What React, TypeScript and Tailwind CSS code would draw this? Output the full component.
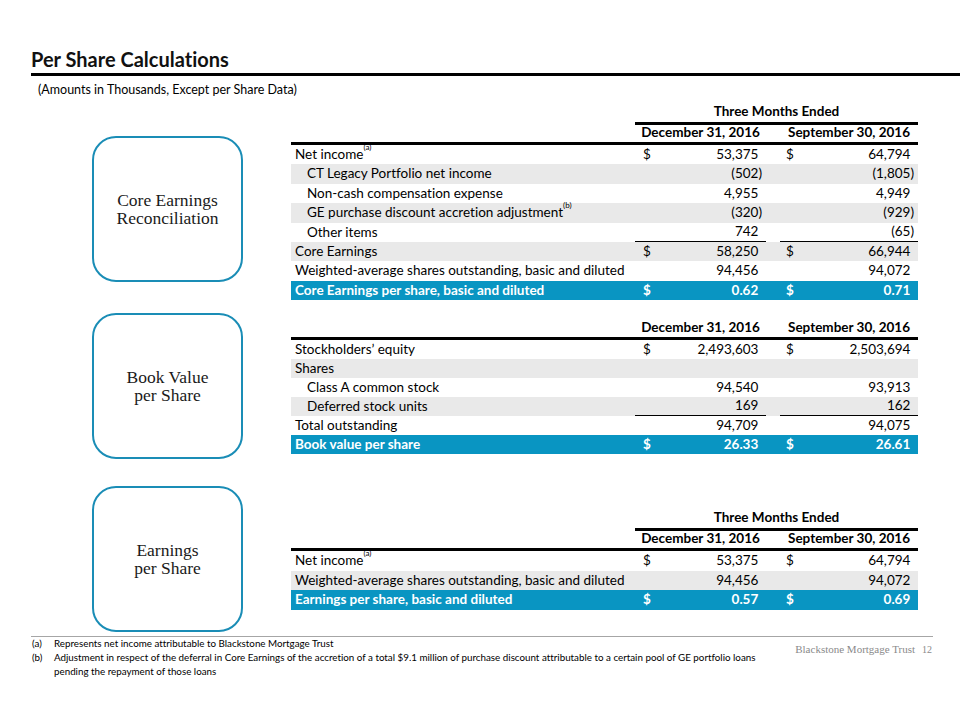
import React from "react";

type Row = {
  label: React.ReactNode;
  indent?: boolean;
  bg?: "w" | "g" | "b";
  d1?: boolean;
  v1: string;
  v2: string;
  under?: boolean;
};

const SANS = "font-['Lato','Open_Sans',sans-serif] [font-variant-ligatures:none]";

function Val({ v }: { v: string }) {
  const neg = v.endsWith(")");
  return (
    <span>
      {v}
      {!neg && v !== "" ? <span className="invisible">)</span> : null}
    </span>
  );
}

function TRow({ r, h }: { r: Row; h: string }) {
  const bg =
    r.bg === "g" ? "bg-[#e9e9e9]" : r.bg === "b" ? "bg-[#0995c2] text-white font-bold" : "bg-white";
  return (
    <div className={`flex ${h} items-center text-[13.5px] leading-none ${bg}`}>
      <div className={`w-[344px] ${r.indent ? "pl-[16px]" : "pl-[4px]"} whitespace-nowrap`}>{r.label}</div>
      <div
        className={`box-border flex h-full w-[131px] items-center justify-between pl-[8px] pr-[4px] ${
          r.under ? "border-b border-black" : ""
        }`}
      >
        <span>{r.d1 ? "$" : ""}</span>
        <Val v={r.v1} />
      </div>
      <div className="w-[14px]" />
      <div
        className={`box-border flex h-full w-[138px] items-center justify-between pl-[6px] pr-[4px] ${
          r.under ? "border-b border-black" : ""
        }`}
      >
        <span>{r.d1 ? "$" : ""}</span>
        <Val v={r.v2} />
      </div>
    </div>
  );
}

function Header({ three }: { three: boolean }) {
  return (
    <div className="text-[13.5px] font-bold leading-none">
      {three && (
        <div className="flex">
          <div className="w-[344px]" />
          <div className="box-border flex h-[21px] w-[283px] items-center justify-center border-b-[3px] border-black pb-[2px]">
            Three Months Ended
          </div>
        </div>
      )}
      <div className="box-border flex h-[20px] items-center border-b-[3px] border-black pb-[1px]">
        <div className="w-[344px]" />
        <div className="w-[131px] text-center whitespace-nowrap">December 31, 2016</div>
        <div className="w-[14px]" />
        <div className="w-[138px] text-center whitespace-nowrap">September 30, 2016</div>
      </div>
    </div>
  );
}

const Sup = ({ c }: { c: string }) => (
  <sup className="relative top-[-1px] align-top text-[8px]">({c})</sup>
);

const t1: Row[] = [
  { label: <>Net income<Sup c="a" /></>, d1: true, v1: "53,375", v2: "64,794" },
  { label: "CT Legacy Portfolio net income", indent: true, bg: "g", v1: "(502)", v2: "(1,805)" },
  { label: "Non-cash compensation expense", indent: true, v1: "4,955", v2: "4,949" },
  { label: <>GE purchase discount accretion adjustment<Sup c="b" /></>, indent: true, bg: "g", v1: "(320)", v2: "(929)" },
  { label: "Other items", indent: true, v1: "742", v2: "(65)", under: true },
  { label: "Core Earnings", bg: "g", d1: true, v1: "58,250", v2: "66,944" },
  { label: "Weighted-average shares outstanding, basic and diluted", v1: "94,456", v2: "94,072" },
  { label: "Core Earnings per share, basic and diluted", bg: "b", d1: true, v1: "0.62", v2: "0.71" },
];

const t2: Row[] = [
  { label: "Stockholders\u2019 equity", d1: true, v1: "2,493,603", v2: "2,503,694" },
  { label: "Shares", bg: "g", v1: "", v2: "" },
  { label: "Class A common stock", indent: true, v1: "94,540", v2: "93,913" },
  { label: "Deferred stock units", indent: true, bg: "g", v1: "169", v2: "162", under: true },
  { label: "Total outstanding", v1: "94,709", v2: "94,075" },
  { label: "Book value per share", bg: "b", d1: true, v1: "26.33", v2: "26.61" },
];

const t3: Row[] = [
  { label: <>Net income<Sup c="a" /></>, d1: true, v1: "53,375", v2: "64,794" },
  { label: "Weighted-average shares outstanding, basic and diluted", bg: "g", v1: "94,456", v2: "94,072" },
  { label: "Earnings per share, basic and diluted", bg: "b", d1: true, v1: "0.57", v2: "0.69" },
];

function Box({ l1, l2 }: { l1: string; l2: string }) {
  return (
    <div className="box-border flex h-[146px] w-[151px] flex-col items-center justify-center rounded-[24px] border-[2.5px] border-[#1a8db6] font-['Liberation_Serif','DejaVu_Serif',serif] text-[17.5px] leading-[18px] text-[#1a1a1a]">
      <div>{l1}</div>
      <div>{l2}</div>
    </div>
  );
}

export default function App() {
  return (
    <div className={`relative h-[720px] w-[960px] overflow-hidden bg-white text-black ${SANS}`}>
      <div className="pl-[31px] pt-[47px]">
        <div className="text-[20px] font-bold leading-[24px] text-[#111]">Per Share Calculations</div>
        <div className="mt-[2px] h-[3px] w-full bg-black" />
        <div className="mt-[5px] pl-[7px] text-[12.5px] leading-[17px]">
          (Amounts in Thousands, Except per Share Data)
        </div>
      </div>
      <div className="flex">
        <div className="ml-[92px] flex flex-col">
          <div className="mt-[38px]">
            <Box l1="Core Earnings" l2="Reconciliation" />
          </div>
          <div className="mt-[31px]">
            <Box l1="Book Value" l2="per Share" />
          </div>
          <div className="mt-[27px]">
            <Box l1="Earnings" l2="per Share" />
          </div>
        </div>
        <div className="ml-[48px] flex flex-col">
          <div className="mt-[6px]">
            <Header three />
            {t1.map((r, i) => (
              <TRow key={i} r={r} h="h-[19.4px]" />
            ))}
          </div>
          <div className="mt-[20px]">
            <Header three={false} />
            {t2.map((r, i) => (
              <TRow key={i} r={r} h="h-[19px]" />
            ))}
          </div>
          <div className="mt-[56px]">
            <Header three />
            {t3.map((r, i) => (
              <TRow key={i} r={r} h="h-[19.5px]" />
            ))}
          </div>
        </div>
      </div>
      <div className="absolute left-[31px] top-[636px] w-[902px] border-t border-[#a6a6a6]" />
      <div className="absolute left-[32px] top-[636px] text-[9.8px] leading-[14px] whitespace-nowrap">
        <div className="flex">
          <span className="w-[22px]">(a)</span>
          <span>Represents net income attributable to Blackstone Mortgage Trust</span>
        </div>
        <div className="flex">
          <span className="w-[22px] shrink-0">(b)</span>
          <span>
            Adjustment in respect of the deferral in Core Earnings of the accretion of a total $9.1 million of purchase
            discount attributable to a certain pool of GE portfolio loans
            <br />
            pending the repayment of those loans
          </span>
        </div>
      </div>
      <div className="absolute right-[28px] top-[641px] font-['Liberation_Serif',serif] text-[11px] text-[#8a8a8a]">
        Blackstone Mortgage Trust<span className="ml-[7px] text-[10px]">12</span>
      </div>
    </div>
  );
}
